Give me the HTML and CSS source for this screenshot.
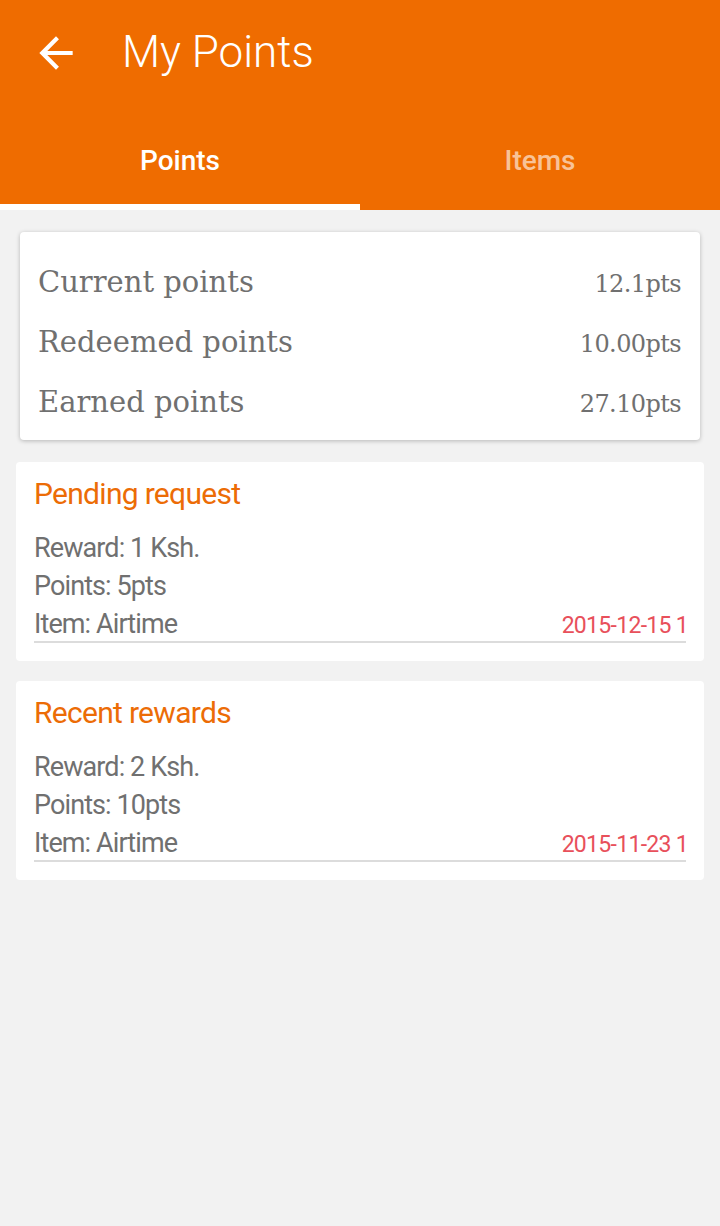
FILE: index.html
```html
<!DOCTYPE html>
<html lang="en">
<head>
    <meta charset="UTF-8">
    <meta name="viewport" content="width=device-width, initial-scale=1.0">
    <title>My Points</title>
    <link rel="stylesheet" href="styles.css">
</head>
<body>
    <header class="app-bar">
        <div class="toolbar">
            <button class="back-btn" aria-label="Back">
                <svg width="50" height="50" viewBox="0 0 24 24">
                    <path d="M20 11H7.83l5.59-5.59L12 4l-8 8 8 8 1.41-1.41L7.83 13H20v-2z" fill="#fff"/>
                </svg>
            </button>
            <h1 class="title">My Points</h1>
        </div>
        <nav class="tabs">
            <div class="tab active">Points</div>
            <div class="tab">Items</div>
        </nav>
    </header>

    <main class="content">
        <section class="summary-card">
            <div class="summary-row">
                <span>Current points</span>
                <span class="value">12.1pts</span>
            </div>
            <div class="summary-row">
                <span>Redeemed points</span>
                <span class="value">10.00pts</span>
            </div>
            <div class="summary-row">
                <span>Earned points</span>
                <span class="value">27.10pts</span>
            </div>
        </section>

        <section class="list-card">
            <div class="list-header">Pending request</div>
            <div class="list-body">
                <div class="entry">
                    <div class="line">Reward: 1 Ksh.</div>
                    <div class="line">Points: 5pts</div>
                    <div class="line last">
                        <span>Item: Airtime</span>
                        <span class="date">2015-12-15 1</span>
                    </div>
                </div>
            </div>
        </section>

        <section class="list-card">
            <div class="list-header">Recent rewards</div>
            <div class="list-body">
                <div class="entry">
                    <div class="line">Reward: 2 Ksh.</div>
                    <div class="line">Points: 10pts</div>
                    <div class="line last">
                        <span>Item: Airtime</span>
                        <span class="date">2015-11-23 1</span>
                    </div>
                </div>
            </div>
        </section>
    </main>
</body>
</html>
```

FILE: styles.css
```css
body {
    margin: 0;
    background-color: #f2f2f2;
    font-family: 'Roboto', sans-serif;
    color: #707070;
}
.app-bar {
    background: #ef6c00;
    color: white;
}
.toolbar {
    height: 106px;
    display: flex;
    align-items: center;
}
.back-btn {
    background: none;
    border: none;
    padding: 0;
    margin-left: 31px;
    width: 50px;
    height: 50px;
    display: flex;
    align-items: center;
    justify-content: center;
}
.title {
    margin: 0 0 0 41px;
    font-size: 44px;
    font-weight: 300;
    line-height: 1;
    padding-bottom: 2px;
}
.tabs {
    display: flex;
    height: 104px;
}
.tab {
    flex: 1;
    display: flex;
    align-items: center;
    justify-content: center;
    font-size: 28px;
    font-weight: 500;
    color: rgba(255, 255, 255, 0.6);
    padding-top: 4px;
}
.tab.active {
    color: white;
    box-shadow: inset 0 -6px 0 white;
}
.content {
    padding: 22px 16px;
}
.summary-card {
    background: white;
    margin: 0 4px 22px;
    padding: 20px 19px 8px 18px;
    border-radius: 4px;
    box-shadow: 0 1px 4px rgba(0, 0, 0, 0.25);
    font-family: 'DejaVu Serif', serif;
}
.summary-row {
    display: flex;
    justify-content: space-between;
    align-items: baseline;
    height: 60px;
    line-height: 60px;
    font-size: 29px;
}
.summary-row .value {
    font-size: 24px;
    letter-spacing: -0.6px;
}
.list-card {
    background: white;
    border-radius: 4px;
    margin-bottom: 20px;
}
.list-header {
    height: 62px;
    padding: 0 18px;
    display: flex;
    align-items: center;
    color: #ec6c06;
    font-size: 30px;
    letter-spacing: -0.7px;
}
.list-body {
    padding: 4px 18px 18px;
}
.entry {
    border-bottom: 2px solid #dcdcdc;
}
.line {
    height: 38px;
    line-height: 40px;
    font-size: 27px;
    letter-spacing: -0.9px;
}
.line.last {
    display: flex;
    justify-content: space-between;
    align-items: baseline;
    height: 37px;
}
.date {
    color: #e8505b;
    font-size: 23px;
    letter-spacing: -0.7px;
    margin-right: -2px;
}
```
